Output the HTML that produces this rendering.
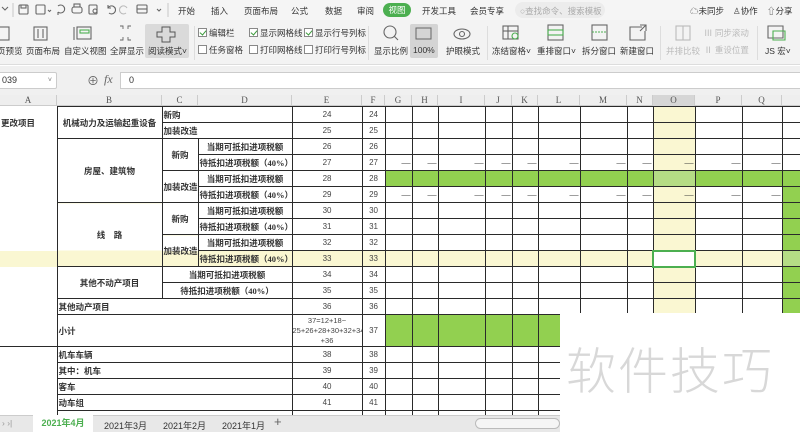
<!DOCTYPE html>
<html><head><meta charset="utf-8">
<style>
*{margin:0;padding:0;box-sizing:border-box}
body{width:800px;height:432px;overflow:hidden;position:relative;background:#fff;font-family:"Liberation Sans","Noto Sans CJK SC",sans-serif;color:#333}
.abs{position:absolute}
.t{position:absolute;font-size:8.5px;white-space:nowrap;color:#333}
.cb{position:absolute;width:9px;height:9px;border:1px solid #888;background:#fff}
.cb.on::after{content:"";position:absolute;left:2px;top:0px;width:3px;height:5px;border:solid #3a9a3a;border-width:0 1.5px 1.5px 0;transform:rotate(40deg)}
.sep{position:absolute;top:26px;width:1px;height:34px;background:#ddd}
table{position:absolute;left:0;top:106px;width:800px;border-collapse:collapse;table-layout:fixed;font-family:"Liberation Serif","Noto Sans CJK SC",serif}
td{border:1px solid #2a2a2a;height:16px;padding:0 1px;font-size:8.5px;overflow:hidden;white-space:nowrap;line-height:14px}
td.a{border-top:none;border-bottom:none;border-left:none}
.b{font-weight:bold;font-size:8.5px}
.c{text-align:center}
.n{text-align:center;font-family:"Liberation Sans",sans-serif;font-size:8px;color:#444;font-weight:normal}
.y{background:#faf7d2}
.g{background:#92d050}
.lg{background:#b5dc85}
.d{text-align:right;font-size:9px}
.hdr{position:absolute;top:95px;height:11px;font-size:9px;color:#555;text-align:center;font-family:"Liberation Serif",serif;line-height:11px;border-right:1px solid #ccc}
</style></head><body>
<div class="abs" style="left:0;top:0;width:800px;height:20px;background:#f5f5f5"></div>
<svg class="abs" style="left:0;top:2px" width="170" height="16" viewBox="0 0 170 16" fill="none" stroke="#666" stroke-width="1.1">
<path d="M2 5l3 3 3-3"/><line x1="13" y1="1" x2="13" y2="15" stroke="#ccc"/>
<rect x="19" y="3" width="9" height="9" rx="1"/><rect x="21" y="3" width="5" height="3"/>
<rect x="36" y="3" width="9" height="9" rx="1"/><path d="M48 8l1.5 1.5 1.5-1.5"/>
<path d="M58 4a4 4 0 1 1 0 6M58 10l0 3"/>
<rect x="72" y="5" width="10" height="6" rx="2"/><rect x="74" y="2" width="6" height="3"/>
<rect x="89" y="3" width="8" height="9" rx="1"/><circle cx="95" cy="9" r="2"/>
<path d="M108 6a4 4 0 1 1 1 5M108 3v3h3"/>
<path d="M127 6a4 4 0 1 0-1 5" stroke="#bbb"/>
<rect x="137" y="3" width="10" height="8" rx="1"/><line x1="137" y1="7" x2="147" y2="7"/>
<path d="M157 7l2 2 2-2"/><line x1="168" y1="1" x2="168" y2="15" stroke="#ccc"/>
</svg>
<div class="t" style="left:178px;top:5px">开始</div>
<div class="t" style="left:211px;top:5px">插入</div>
<div class="t" style="left:244px;top:5px">页面布局</div>
<div class="t" style="left:291px;top:5px">公式</div>
<div class="t" style="left:325px;top:5px">数据</div>
<div class="t" style="left:357px;top:5px">审阅</div>
<div class="abs" style="left:383px;top:3px;width:28px;height:14px;border-radius:7px;background:#4caf50;color:#fff;font-size:8.5px;text-align:center;line-height:14px">视图</div>
<div class="t" style="left:422px;top:5px">开发工具</div>
<div class="t" style="left:470px;top:5px">会员专享</div>
<div class="abs" style="left:515px;top:2px;width:90px;height:16px;border-radius:8px;background:#ececec"></div>
<div class="t" style="left:520px;top:5px;color:#aaa">○查找命令、搜索模板</div>
<div class="t" style="left:690px;top:5px">☁未同步</div>
<div class="t" style="left:733px;top:5px">♙协作</div>
<div class="t" style="left:767px;top:5px">⇧分享</div>
<div class="abs" style="left:0;top:20px;width:800px;height:45px;background:#f3f3f3;border-bottom:1px solid #ddd"></div>
<svg class="abs" style="left:0;top:22px" width="800" height="22" viewBox="0 0 800 22" fill="none" stroke="#666" stroke-width="1.1">
<rect x="-4" y="5" width="13" height="13"/><rect x="34" y="5" width="13" height="13"/><line x1="38" y1="7" x2="38" y2="16"/><line x1="43" y1="7" x2="43" y2="16"/>
<rect x="77" y="5" width="14" height="12"/><rect x="80" y="8" width="9" height="3" stroke="#4caf50"/><line x1="74" y1="5" x2="74" y2="18"/>
<path d="M120 4h3v3M131 4h-3v3M120 18h3v-3M131 18h-3v-3" stroke-width="0.9"/>
<circle cx="390" cy="10" r="6"/><line x1="394" y1="14" x2="398" y2="18"/>
<ellipse cx="462" cy="12" rx="8" ry="5"/><circle cx="462" cy="12" r="2.5"/>
<rect x="503" y="4" width="15" height="13"/><line x1="503" y1="9" x2="518" y2="9"/><line x1="508" y1="4" x2="508" y2="17"/><circle cx="515" cy="14" r="3" stroke="#4caf50"/>
<rect x="548" y="3" width="15" height="15"/><rect x="548" y="8" width="15" height="5" stroke="#4caf50"/>
<rect x="592" y="3" width="15" height="15"/><line x1="592" y1="10" x2="607" y2="10" stroke="#4caf50" stroke-dasharray="2 1"/>
<path d="M642 5h-12v13h15v-9M640 3h6v6M646 3l-6 6"/>
<g stroke="#bbb"><rect x="676" y="4" width="14" height="14"/><line x1="683" y1="4" x2="683" y2="18"/></g>
<path d="M768 4h15v12h-15z"/><path d="M773 9h12v9h-12z" stroke="#4caf50"/>
</svg>
<div class="t" style="left:-3px;top:45px">页预览</div>
<div class="t" style="left:26px;top:45px">页面布局</div>
<div class="t" style="left:64px;top:45px">自定义视图</div>
<div class="t" style="left:110px;top:45px">全屏显示</div>
<div class="abs" style="left:145px;top:24px;width:44px;height:34px;background:#dadada;border-radius:2px"></div>
<svg class="abs" style="left:155px;top:26px" width="22" height="18" fill="none" stroke="#555"><path d="M7 1h8v5h5v5h-5v5h-8v-5h-5v-5h5z"/></svg>
<div class="t" style="left:148px;top:45px">阅读模式˅</div>
<div class="sep" style="left:194px"></div>
<div class="cb on" style="left:198px;top:28px"></div><div class="t" style="left:209px;top:27px">编辑栏</div>
<div class="cb" style="left:198px;top:45px"></div><div class="t" style="left:209px;top:44px">任务窗格</div>
<div class="cb on" style="left:249px;top:28px"></div><div class="t" style="left:260px;top:27px">显示网格线</div>
<div class="cb" style="left:249px;top:45px"></div><div class="t" style="left:260px;top:44px">打印网格线</div>
<div class="cb on" style="left:304px;top:28px"></div><div class="t" style="left:315px;top:27px">显示行号列标</div>
<div class="cb" style="left:304px;top:45px"></div><div class="t" style="left:315px;top:44px">打印行号列标</div>
<div class="sep" style="left:368px"></div>
<div class="t" style="left:374px;top:45px">显示比例</div>
<div class="abs" style="left:410px;top:24px;width:28px;height:34px;background:#d4d4d4;border-radius:2px"></div>
<svg class="abs" style="left:414px;top:26px" width="20" height="16" fill="none" stroke="#666"><rect x="2" y="2" width="15" height="11"/></svg>
<div class="t" style="left:413px;top:45px">100%</div>
<div class="t" style="left:446px;top:45px">护眼模式</div>
<div class="sep" style="left:487px"></div>
<div class="t" style="left:492px;top:45px">冻结窗格˅</div>
<div class="t" style="left:537px;top:45px">重排窗口˅</div>
<div class="t" style="left:582px;top:45px">拆分窗口</div>
<div class="t" style="left:620px;top:45px">新建窗口</div>
<div class="sep" style="left:660px"></div>
<div class="t" style="left:666px;top:45px;color:#bbb">并排比较</div>
<div class="t" style="left:704px;top:27px;color:#bbb">Ⅲ 同步滚动</div>
<div class="t" style="left:704px;top:44px;color:#bbb">Ⅱ 重设位置</div>
<div class="sep" style="left:757px"></div>
<div class="t" style="left:765px;top:45px">JS 宏˅</div>
<div class="abs" style="left:0;top:66px;width:800px;height:29px;background:#f0f0f0"></div>
<div class="abs" style="left:-2px;top:72px;width:59px;height:17px;background:#fff;border:1px solid #ccc;border-radius:2px;font-size:9px;padding-left:3px;line-height:15px">039<span style="position:absolute;right:4px;font-size:7px;color:#777">˅</span></div>
<div class="t" style="left:87px;top:72px;font-size:12px;color:#666">⊕</div>
<div class="t" style="left:104px;top:72px;font-size:12px;font-style:italic;color:#666;font-family:'Liberation Serif',serif">fx</div>
<div class="abs" style="left:120px;top:72px;width:682px;height:17px;background:#fff;border:1px solid #ccc;font-size:9px;padding-left:8px;line-height:15px">0</div>
<div class="abs" style="left:0;top:95px;width:800px;height:11px;background:#eee;border-bottom:1px solid #ccc"></div>
<div class="hdr" style="left:0;width:57px">A</div><div class="hdr" style="left:57px;width:105px">B</div><div class="hdr" style="left:162px;width:36px">C</div><div class="hdr" style="left:198px;width:94px">D</div><div class="hdr" style="left:292px;width:70px">E</div><div class="hdr" style="left:362px;width:23px">F</div><div class="hdr" style="left:385px;width:27px">G</div><div class="hdr" style="left:412px;width:26px">H</div><div class="hdr" style="left:438px;width:47px">I</div><div class="hdr" style="left:485px;width:27px">J</div><div class="hdr" style="left:512px;width:26px">K</div><div class="hdr" style="left:538px;width:42px">L</div><div class="hdr" style="left:580px;width:47px">M</div><div class="hdr" style="left:627px;width:26px">N</div><div class="hdr" style="left:653px;width:42px;background:#d6d6d6">O</div><div class="hdr" style="left:695px;width:47px">P</div><div class="hdr" style="left:742px;width:40px">Q</div>
<table>
<colgroup><col style="width:57px"><col style="width:105px"><col style="width:36px"><col style="width:94px"><col style="width:70px"><col style="width:23px"><col style="width:27px"><col style="width:26px"><col style="width:47px"><col style="width:27px"><col style="width:26px"><col style="width:42px"><col style="width:47px"><col style="width:26px"><col style="width:42px"><col style="width:47px"><col style="width:40px"><col style="width:18px"></colgroup>
<tr><td class="a b" rowspan="2" style="vertical-align:middle">更改项目</td><td class="b c" rowspan="2">机械动力及运输起重设备</td><td class="b" colspan="2">新购</td><td class="n">24</td><td class="n">24</td><td></td><td></td><td></td><td></td><td></td><td></td><td></td><td></td><td class="y"></td><td></td><td></td><td></td></tr>
<tr><td class="b" colspan="2">加装改造</td><td class="n">25</td><td class="n">25</td><td></td><td></td><td></td><td></td><td></td><td></td><td></td><td></td><td class="y"></td><td></td><td></td><td></td></tr>
<tr><td class="a"></td><td class="b c" rowspan="4">房屋、建筑物</td><td class="b c" rowspan="2">新购</td><td class="b c">当期可抵扣进项税额</td><td class="n">26</td><td class="n">26</td><td></td><td></td><td></td><td></td><td></td><td></td><td></td><td></td><td class="y"></td><td></td><td></td><td></td></tr>
<tr><td class="a"></td><td class="b">待抵扣进项税额（40%）</td><td class="n">27</td><td class="n">27</td><td class="d">—</td><td class="d">—</td><td class="d">—</td><td class="d">—</td><td class="d">—</td><td class="d">—</td><td class="d">—</td><td class="d">—</td><td class="d y">—</td><td class="d">—</td><td class="d">—</td><td></td></tr>
<tr><td class="a"></td><td class="b c" rowspan="2">加装改造</td><td class="b c">当期可抵扣进项税额</td><td class="n">28</td><td class="n">28</td><td class="g"></td><td class="g"></td><td class="g"></td><td class="g"></td><td class="g"></td><td class="g"></td><td class="g"></td><td class="g"></td><td class="lg"></td><td class="g"></td><td class="g"></td><td class="g"></td></tr>
<tr><td class="a"></td><td class="b">待抵扣进项税额（40%）</td><td class="n">29</td><td class="n">29</td><td class="d">—</td><td class="d">—</td><td class="d">—</td><td class="d">—</td><td class="d">—</td><td class="d">—</td><td class="d">—</td><td class="d">—</td><td class="d y">—</td><td class="d">—</td><td class="d">—</td><td class="g"></td></tr>
<tr><td class="a"></td><td class="b c" rowspan="4" style="background:linear-gradient(#fff 75%,#faf7d2 75%)">线　路</td><td class="b c" rowspan="2">新购</td><td class="b c">当期可抵扣进项税额</td><td class="n">30</td><td class="n">30</td><td></td><td></td><td></td><td></td><td></td><td></td><td></td><td></td><td class="y"></td><td></td><td></td><td class="g"></td></tr>
<tr><td class="a"></td><td class="b">待抵扣进项税额（40%）</td><td class="n">31</td><td class="n">31</td><td></td><td></td><td></td><td></td><td></td><td></td><td></td><td></td><td class="y"></td><td></td><td></td><td class="g"></td></tr>
<tr><td class="a"></td><td class="b c" rowspan="2" style="background:linear-gradient(#fff 50%,#faf7d2 50%)">加装改造</td><td class="b c">当期可抵扣进项税额</td><td class="n">32</td><td class="n">32</td><td></td><td></td><td></td><td></td><td></td><td></td><td></td><td></td><td class="y"></td><td></td><td></td><td class="g"></td></tr>
<tr class="y"><td class="a y"></td><td class="b y">待抵扣进项税额（40%）</td><td class="n">33</td><td class="n">33</td><td></td><td></td><td></td><td></td><td></td><td></td><td></td><td></td><td style="background:#fff;border:2px solid #4caf50"></td><td></td><td></td><td class="lg"></td></tr>
<tr><td class="a"></td><td class="b c" rowspan="2">其他不动产项目</td><td class="b c" colspan="2">当期可抵扣进项税额</td><td class="n">34</td><td class="n">34</td><td></td><td></td><td></td><td></td><td></td><td></td><td></td><td></td><td class="y"></td><td></td><td></td><td class="g"></td></tr>
<tr><td class="a"></td><td class="b c" colspan="2">待抵扣进项税额（40%）</td><td class="n">35</td><td class="n">35</td><td></td><td></td><td></td><td></td><td></td><td></td><td></td><td></td><td class="y"></td><td></td><td></td><td class="g"></td></tr>
<tr><td class="a"></td><td class="b" colspan="3">其他动产项目</td><td class="n">36</td><td class="n">36</td><td></td><td></td><td></td><td></td><td></td><td></td><td></td><td></td><td class="y"></td><td></td><td></td><td class="g"></td></tr>
<tr><td class="a" style="height:32px;border-bottom:1px solid #2a2a2a"></td><td class="b" colspan="3">小计</td><td class="n" style="line-height:10px;white-space:normal;font-size:7.5px;padding:0">37=12+18~<br>25+26+28+30+32+34<br>+36</td><td class="n">37</td><td class="g"></td><td class="g"></td><td class="g"></td><td class="g"></td><td class="g"></td><td class="g"></td><td class="g"></td><td class="g"></td><td class="g"></td><td class="g"></td><td class="g"></td><td class="g"></td></tr>
<tr><td class="a"></td><td class="b" colspan="3">机车车辆</td><td class="n">38</td><td class="n">38</td><td></td><td></td><td></td><td></td><td></td><td></td><td></td><td></td><td></td><td></td><td></td><td></td></tr>
<tr><td class="a"></td><td class="b" colspan="3">其中：机车</td><td class="n">39</td><td class="n">39</td><td></td><td></td><td></td><td></td><td></td><td></td><td></td><td></td><td></td><td></td><td></td><td></td></tr>
<tr><td class="a"></td><td class="b" colspan="3">客车</td><td class="n">40</td><td class="n">40</td><td></td><td></td><td></td><td></td><td></td><td></td><td></td><td></td><td></td><td></td><td></td><td></td></tr>
<tr><td class="a"></td><td class="b" colspan="3">动车组</td><td class="n">41</td><td class="n">41</td><td></td><td></td><td></td><td></td><td></td><td></td><td></td><td></td><td></td><td></td><td></td><td></td></tr>
<tr><td class="a"></td><td colspan="3"></td><td></td><td></td><td></td><td></td><td></td><td></td><td></td><td></td><td></td><td></td><td></td><td></td><td></td><td></td></tr>
</table>
<div class="abs" style="left:0;top:415px;width:560px;height:17px;background:#e8e8e8;border-top:1px solid #ccc"></div>
<div class="t" style="left:2px;top:418px;color:#999">›  ›|</div>
<div class="abs" style="left:33px;top:415px;width:60px;height:17px;background:#fff;color:#4caf50;font-size:9px;text-align:center;line-height:17px;font-weight:bold">2021年4月</div>
<div class="t" style="left:104px;top:419px;font-size:9px">2021年3月</div>
<div class="t" style="left:163px;top:419px;font-size:9px">2021年2月</div>
<div class="t" style="left:222px;top:419px;font-size:9px">2021年1月</div>
<div class="t" style="left:274px;top:414px;font-size:13px;color:#666">+</div>
<div class="abs" style="left:475px;top:418px;width:85px;height:11px;border:1px solid #bbb;border-radius:6px;background:#f5f5f5"></div>
<div class="abs" style="left:560px;top:313px;width:240px;height:119px;background:#fff"></div>
<div class="abs" style="left:566px;top:338px;font-size:50px;color:#d8d8d8;letter-spacing:2px;font-family:'Noto Sans CJK SC',sans-serif;font-weight:300;line-height:60px">软件技巧</div>
</body></html>
